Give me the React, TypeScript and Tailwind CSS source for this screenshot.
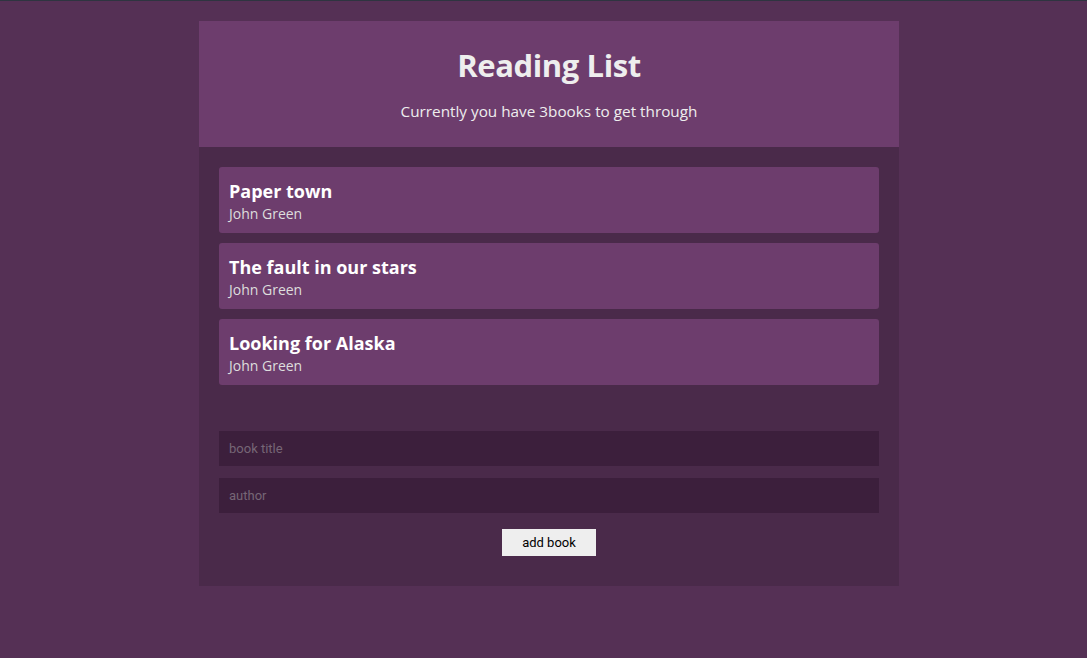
import { useState } from 'react'

type Book = { id: number; title: string; author: string }

const initialBooks: Book[] = [
  { id: 1, title: 'Paper town', author: 'John Green' },
  { id: 2, title: 'The fault in our stars', author: 'John Green' },
  { id: 3, title: 'Looking for Alaska', author: 'John Green' },
]

export default function App() {
  const [books, setBooks] = useState<Book[]>(initialBooks)
  const [title, setTitle] = useState('')
  const [author, setAuthor] = useState('')

  const addBook = (e: React.FormEvent) => {
    e.preventDefault()
    if (!title.trim()) return
    setBooks([...books, { id: Date.now(), title, author }])
    setTitle('')
    setAuthor('')
  }

  return (
    <div className="min-h-screen bg-[#553055] border-t border-[#2e3440] pt-5 font-['Open_Sans',sans-serif]">
      <div className="w-[700px] ml-[199px] bg-[#4a2a4a]">
        {/* Navbar */}
        <div className="bg-[#6d3d6d] h-[126px] flex flex-col items-center text-[#eeeeee]">
          <h1 className="text-[31px] font-bold mt-[23px] leading-[42px] tracking-[-0.4px]">Reading List</h1>
          <p className="text-[15.3px] mt-[15px] leading-[20px]">Currently you have {books.length}books to get through</p>
        </div>

        {/* Book list */}
        <ul className="px-5 pt-5 flex flex-col gap-[10px]">
          {books.map(book => (
            <li key={book.id} className="bg-[#6d3d6d] rounded-[3px] h-[66px] px-[10px] pt-[12px] text-white">
              <div className="text-[18px] font-bold leading-[24px]">{book.title}</div>
              <div className="text-[14px] leading-[22px] text-[#dddddd]">{book.author}</div>
            </li>
          ))}
        </ul>

        {/* Form */}
        <form onSubmit={addBook} className="px-5 pt-[46px] pb-[30px] flex flex-col">
          <input
            value={title}
            onChange={e => setTitle(e.target.value)}
            placeholder="book title"
            className="h-[35px] bg-[#3c1f3c] px-[10px] text-[13px] text-white placeholder:text-[#766676] outline-none font-['Roboto',sans-serif]"
          />
          <input
            value={author}
            onChange={e => setAuthor(e.target.value)}
            placeholder="author"
            className="h-[35px] mt-3 bg-[#3c1f3c] px-[10px] text-[13px] text-white placeholder:text-[#766676] outline-none font-['Roboto',sans-serif]"
          />
          <button
            type="submit"
            className="self-center mt-4 w-[94px] h-[27px] bg-[#eeeeee] text-[13px] text-black font-['Roboto',sans-serif]"
          >
            add book
          </button>
        </form>
      </div>
    </div>
  )
}
